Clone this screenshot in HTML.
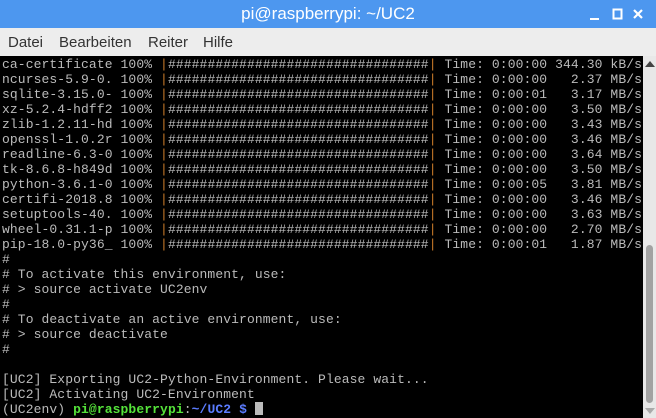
<!DOCTYPE html>
<html><head><meta charset="utf-8"><style>
html,body{margin:0;padding:0;width:656px;height:418px;overflow:hidden;background:#000;}
.title{position:absolute;left:0;top:0;width:656px;height:28px;background:#4d97ef;color:#fff;font:17px "Liberation Sans",sans-serif;text-align:center;line-height:28px;}
.menu{position:absolute;left:0;top:28px;width:656px;height:28px;background:#ededed;font:15px "Liberation Sans",sans-serif;color:#333;line-height:30px;}
.menu span{position:absolute;top:0}
.term{position:absolute;left:0;top:56px;width:643px;height:362px;background:#000;}
pre{margin:0;position:absolute;left:2px;top:1px;font:13px/15px "Liberation Mono",monospace;letter-spacing:0.1px;color:#bbb;}
.o{color:#c87a28}.g{color:#55e33a;font-weight:bold}.b{color:#5b7cff;font-weight:bold}
.cur{display:inline-block;width:8px;height:13px;background:#bbb;vertical-align:-2px}
.sb{position:absolute;left:643px;top:56px;width:13px;height:362px;background:#e8e8e8;}
.thumb{position:absolute;left:3px;top:189px;width:7px;height:158px;background:#a2a2a2;border-radius:4px;}
</style></head><body>
<div class="title">pi@raspberrypi: ~/UC2
<svg style="position:absolute;left:590px;top:8px" width="60" height="14">
<rect x="0" y="10" width="9" height="2" fill="#fff"/>
<rect x="23.5" y="1.5" width="8" height="9" fill="none" stroke="#fff" stroke-width="2"/>
<path d="M44 2 L52 10 M52 2 L44 10" stroke="#fff" stroke-width="2.2"/>
</svg></div>
<div class="menu"><span style="left:8px">Datei</span><span style="left:59px">Bearbeiten</span><span style="left:148px">Reiter</span><span style="left:203px">Hilfe</span></div>
<div class="term"><pre>ca-certificate 100% <span class="o">|</span>#################################<span class="o">|</span> Time: 0:00:00 344.30 kB/s
ncurses-5.9-0. 100% <span class="o">|</span>#################################<span class="o">|</span> Time: 0:00:00   2.37 MB/s
sqlite-3.15.0- 100% <span class="o">|</span>#################################<span class="o">|</span> Time: 0:00:01   3.17 MB/s
xz-5.2.4-hdff2 100% <span class="o">|</span>#################################<span class="o">|</span> Time: 0:00:00   3.50 MB/s
zlib-1.2.11-hd 100% <span class="o">|</span>#################################<span class="o">|</span> Time: 0:00:00   3.43 MB/s
openssl-1.0.2r 100% <span class="o">|</span>#################################<span class="o">|</span> Time: 0:00:00   3.46 MB/s
readline-6.3-0 100% <span class="o">|</span>#################################<span class="o">|</span> Time: 0:00:00   3.64 MB/s
tk-8.6.8-h849d 100% <span class="o">|</span>#################################<span class="o">|</span> Time: 0:00:00   3.50 MB/s
python-3.6.1-0 100% <span class="o">|</span>#################################<span class="o">|</span> Time: 0:00:05   3.81 MB/s
certifi-2018.8 100% <span class="o">|</span>#################################<span class="o">|</span> Time: 0:00:00   3.46 MB/s
setuptools-40. 100% <span class="o">|</span>#################################<span class="o">|</span> Time: 0:00:00   3.63 MB/s
wheel-0.31.1-p 100% <span class="o">|</span>#################################<span class="o">|</span> Time: 0:00:00   2.70 MB/s
pip-18.0-py36_ 100% <span class="o">|</span>#################################<span class="o">|</span> Time: 0:00:01   1.87 MB/s
#
# To activate this environment, use:
# &gt; source activate UC2env
#
# To deactivate an active environment, use:
# &gt; source deactivate
#

[UC2] Exporting UC2-Python-Environment. Please wait...
[UC2] Activating UC2-Environment
(UC2env) <span class="g">pi@raspberrypi</span>:<span class="b">~/UC2 $</span> <span class="cur"></span></pre></div>
<div class="sb"><svg style="position:absolute;left:2px;top:4px" width="10" height="8"><path d="M0 7 L5 1 L10 7Z" fill="#444"/></svg>
<div class="thumb"></div>
<svg style="position:absolute;left:2px;top:351px" width="10" height="8"><path d="M0 1 L5 7 L10 1Z" fill="#aaa"/></svg></div>
</body></html>
